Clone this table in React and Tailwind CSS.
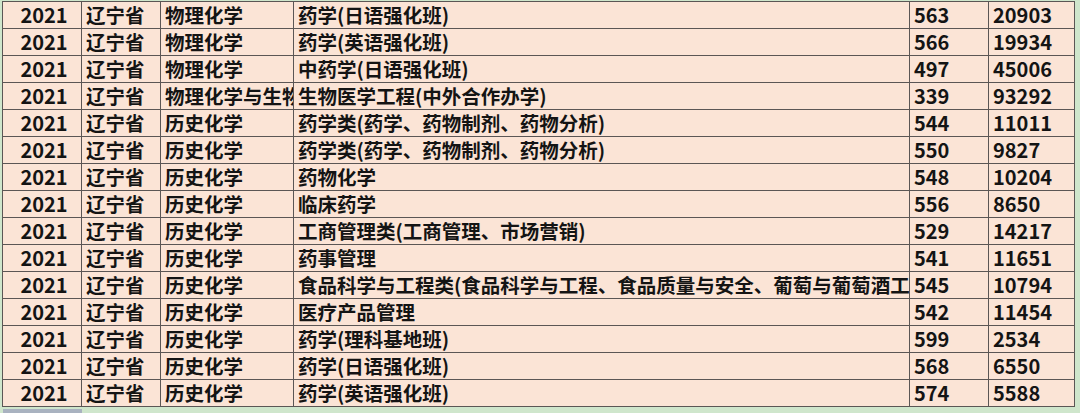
const rows = [
  ['物理化学', '药学(日语强化班)', '563', '20903'],
  ['物理化学', '药学(英语强化班)', '566', '19934'],
  ['物理化学', '中药学(日语强化班)', '497', '45006'],
  ['物理化学与生物', '生物医学工程(中外合作办学)', '339', '93292'],
  ['历史化学', '药学类(药学、药物制剂、药物分析)', '544', '11011'],
  ['历史化学', '药学类(药学、药物制剂、药物分析)', '550', '9827'],
  ['历史化学', '药物化学', '548', '10204'],
  ['历史化学', '临床药学', '556', '8650'],
  ['历史化学', '工商管理类(工商管理、市场营销)', '529', '14217'],
  ['历史化学', '药事管理', '541', '11651'],
  ['历史化学', '食品科学与工程类(食品科学与工程、食品质量与安全、葡萄与葡萄酒工程)', '545', '10794'],
  ['历史化学', '医疗产品管理', '542', '11454'],
  ['历史化学', '药学(理科基地班)', '599', '2534'],
  ['历史化学', '药学(日语强化班)', '568', '6550'],
  ['历史化学', '药学(英语强化班)', '574', '5588'],
];

const cell = 'h-full border-r border-[#5b5655] whitespace-nowrap flex items-center pl-[4px]';

export default function App() {
  return (
    <div
      className="w-[1080px] h-[413px] bg-[#cfe6cc] overflow-hidden pl-[2px] pt-[1px]"
      style={{ fontFamily: '"Noto Sans CJK SC", "Noto Sans", sans-serif' }}
    >
      <div className="w-[1073px] border-l border-t border-[#5b5655] bg-[#fbe4d6] text-[19.5px] font-bold text-[#141414] leading-[24px]">
        {rows.map((r, i) => (
          <div
            key={i}
            className="grid grid-cols-[79px_79px_133px_616px_79px_86px] h-[27px] border-b border-[#5b5655]"
          >
            <div className={`${cell} justify-center pl-0 text-[20px]`}>2021</div>
            <div className={cell}>辽宁省</div>
            <div className={`${cell} overflow-hidden`}>{r[0]}</div>
            <div className={`${cell} overflow-hidden`}>{r[1]}</div>
            <div className={`${cell} text-[20px]`}>{r[2]}</div>
            <div className={`${cell} text-[20px]`}>{r[3]}</div>
          </div>
        ))}
      </div>
      <div className="w-[79px] h-[4px] mt-[2px] ml-[1px] bg-[#a9b2c0]" />
    </div>
  );
}
